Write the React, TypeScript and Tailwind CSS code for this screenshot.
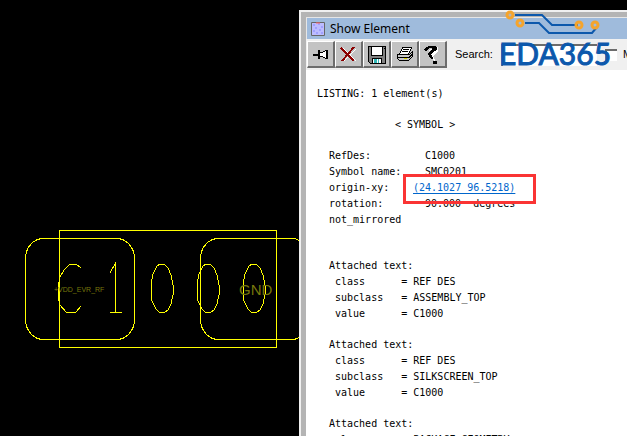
import React from "react";

type Item = { label: string; icon: React.ReactNode };

const tools: Item[] = [
  {
    label: "Pin",
    icon: (
      <g fill="#fff" stroke="#000">
        <path d="M6 14.5h5" strokeWidth="2" />
        <path d="M11.500 10v9" strokeWidth="2" />
        <path d="M12.500 12.500h3l3-2h1v8h-1l-3-2h-3z" />
        <path d="M20.500 10v9" />
      </g>
    ),
  },
  {
    label: "Close",
    icon: (
      <g fill="none">
        <path d="M8 8l13 13M21 9L9 21" stroke="#fff" strokeWidth="1" />
        <path d="M6 8l13 13M19 7L7 21" stroke="#8b0000" strokeWidth="2" />
      </g>
    ),
  },
  {
    label: "Save",
    icon: (
      <g>
        <path d="M5.500 6.500h17v17h-15l-2-2z" fill="#808080" stroke="#000" />
        <path d="M8.500 6.500h11v9h-11z" fill="#fff" stroke="#000" />
        <path d="M9.500 18.500h9v5h-9z" fill="#fff" stroke="#000" />
        <path d="M11 19h3v4h-3zM15 19h1v4h-1z" fill="#31b7b7" />
        <path d="M21 8h1v1h-1z" fill="#000" />
      </g>
    ),
  },
  {
    label: "Print",
    icon: (
      <g stroke="#000">
        <path d="M11.500 7.500h9l-3 7h-9z" fill="#fff" />
        <path d="M6.500 14.500h12l3-3v5l-4 4h-9l-2-2z" fill="#c8c8c8" />
        <path d="M6 17.500h12l3-3M12 9.500h6M11 11.500h6" fill="none" />
        <path d="M13 18.500h3" stroke="#d9d900" />
      </g>
    ),
  },
  {
    label: "Help",
    icon: (
      <g>
        <path d="M8 12l4-3 3 1-4 4 1 4 3 3 1-1-2-4 5-5V7z" fill="#fff" />
        <path d="M5 10l2-3 3-1h6l2 1v2l-2 2-4 3 2 4-1 1-2-1-2-4 1-2 4-3V9l-3-1-3 2-1 2z" fill="#000" />
        <path d="M14 21h4v3h-4z" fill="#000" />
      </g>
    ),
  },
];

const attached = [
  ["REF DES", "ASSEMBLY_TOP", "C1000"],
  ["REF DES", "SILKSCREEN_TOP", "C1000"],
  ["PACKAGE GEOMETRY", "ASSEMBLY_TOP", ""],
];

const zero = "l3-2h4l4 4 3 7 2 10v10l-2 9-3 6-3 2h-6l-3-3-4-8-1-9v-8l2-10z";

function Board() {
  return (
    <svg className="block h-[436px] w-[299px] overflow-hidden" viewBox="0 0 299 436" fill="none" stroke="#ffff00" shapeRendering="crispEdges">
      <rect x="59.5" y="230.5" width="217" height="117" />
      <rect x="25.5" y="238.5" width="109" height="101" rx="18" ry="20" />
      <rect x="200.5" y="238.5" width="109" height="101" rx="18" ry="20" />
      <path d="M81 268l-5-4h-6l-6 6-4 7-2 10v10l2 8 6 7h10l5-6" />
      <path d="M110 273l5-9v48M110 312.5h12" />
      <path d={"M153 266" + zero} transform="translate(4 0)" />
      <path d={"M203 266" + zero} />
      <path d={"M249 266" + zero} />
      <g fill="#77770b" stroke="none" className="font-['Liberation_Sans',sans-serif]">
        <text x="54" y="292" fontSize="7">+VDD_EVR_RF</text>
        <text x="239" y="295" fontSize="15">GND</text>
      </g>
    </svg>
  );
}

function Logo() {
  return (
    <svg className="absolute -top-[2px] right-[14px] h-[60px] w-28 overflow-visible" viewBox="0 0 112 60" fill="none">
      <path d="M14 5h27l10 10h26M24 13h14l10 10h43l5-6" stroke="#0c58ac" strokeWidth="2" />
      <g stroke="#f5a42c" strokeWidth="3">
        <circle cx="9" cy="5" r="3" />
        <circle cx="19" cy="13" r="3" />
        <circle cx="78" cy="15" r="3" />
        <circle cx="94" cy="15" r="3" />
      </g>
      <text x="-2" y="55" fontSize="30" fill="#0c58ac" stroke="#0c58ac" className="font-['Lato',sans-serif]">EDA365</text>
    </svg>
  );
}

export default function App() {
  return (
    <div className="flex h-screen overflow-hidden bg-black font-['Liberation_Sans',sans-serif] text-black">
      <div className="shrink-0"><Board /></div>
      <div className="flex min-w-0 flex-1 flex-col pt-[10px]">
        <section className="relative flex min-h-0 flex-1 flex-col border-l-2 border-t-2 border-[#f0f0f0] bg-[#b4b4b4] pl-[5px] pt-[5px]">
          <header className="flex h-[22px] shrink-0 items-center gap-[5px] border-l border-t border-[#e6e6e6] bg-[#9fbbdc] pl-1">
            <svg className="h-[14px] w-[14px]" viewBox="0 0 14 14">
              <path d="M.5.5h13v13H.5z" fill="#bcbcff" stroke="#666" />
              <path d="M2 3h2M7 2h2M10 5h2M4 6h2M2 9h2M8 8h2M5 11h2M10 11h2" stroke="#8484ff" />
              <path d="M5 1h4" stroke="#f66" />
            </svg>
            <h1 className="font-['Noto_Sans',sans-serif] text-xs">Show Element</h1>
          </header>
          <div className="flex h-[31px] shrink-0 items-center overflow-hidden bg-[#f0f0f0] pl-px">
            {tools.map((t) => (
              <button key={t.label} aria-label={t.label} className="h-[27px] w-7 shrink-0 border-b-2 border-l border-r-2 border-t border-b-[#6c6c6c] border-l-white border-r-[#6c6c6c] border-t-white bg-[#c3c3c3]">
                <svg className="h-6 w-[25px]" viewBox="1 2 25 24" shapeRendering="crispEdges">{t.icon}</svg>
              </button>
            ))}
            <label htmlFor="search" className="mx-2 text-[11px]">Search:</label>
            <input id="search" className="h-[22px] w-24 shrink-0 border-l-2 border-t-2 border-[#6c6c6c] bg-white" />
            <label className="ml-2 flex shrink-0 items-center gap-[6px] text-[11px]">
              <input type="checkbox" className="h-3 w-3 appearance-none border-l-2 border-t-2 border-[#6c6c6c] bg-white" />M
            </label>
          </div>
          <main className="min-h-0 flex-1 overflow-hidden whitespace-pre bg-white pl-[11px] pt-4 font-['DejaVu_Sans_Mono',monospace] text-[10px] leading-4">
            <p>LISTING: 1 element(s)</p>
            <h2 className="mt-[15px] pl-[78px]">{"< SYMBOL >"}</h2>
            <dl className="mt-[15px] grid grid-cols-[96px_1fr] pl-3">
              <dt>RefDes:</dt><dd>C1000</dd>
              <dt>Symbol name:</dt><dd>SMC0201</dd>
              <dt>origin-xy:</dt>
              <dd className="relative -ml-3">
                <a href="#origin" className="text-[#0066cc] underline underline-offset-2">(24.1027 96.5218)</a>
                <span className="absolute -left-[10px] -top-[6px] h-[30px] w-[133px] border-[3px] border-[#fa3434]" />
              </dd>
              <dt>rotation:</dt><dd>{"90.000  degrees"}</dd>
              <dt>not_mirrored</dt>
            </dl>
            <div className="mt-[30px] flex flex-col gap-[15px] pl-3">
              {attached.map(([c, s, v], i) => (
                <section key={i}>
                  <h3>Attached text:</h3>
                  <p>{" class      = " + c}</p>
                  <p>{" subclass   = " + s}</p>
                  <p>{" value      = " + v}</p>
                </section>
              ))}
            </div>
          </main>
          <Logo />
        </section>
      </div>
    </div>
  );
}
